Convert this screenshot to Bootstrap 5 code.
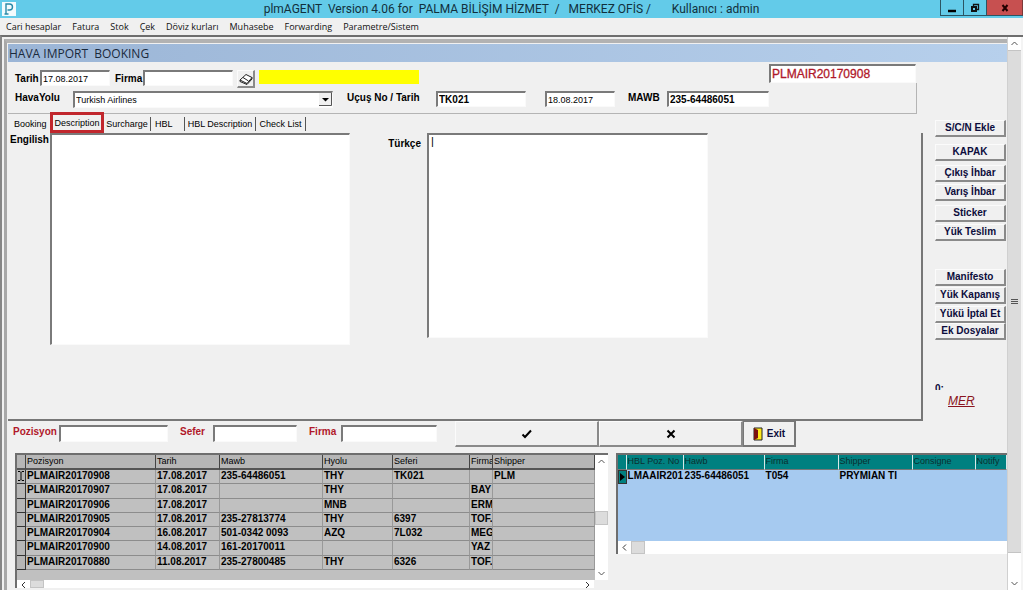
<!DOCTYPE html>
<html lang="tr">
<head>
<meta charset="utf-8">
<meta name="viewport" content="width=device-width, initial-scale=1">
<title>plmAGENT - Hava Import Booking</title>
<link href="https://cdn.jsdelivr.net/npm/bootstrap@5.3.0/dist/css/bootstrap.min.css" rel="stylesheet">
<style>
  :root { --face: #f0f0f0; --shade: #6e6e6e; --ui: "Liberation Sans", sans-serif; --segoe: "Open Sans", "Noto Sans", sans-serif; }
  body { background: var(--face); color: #000; font: 9px/14px var(--ui); overflow: hidden; }
  label, .strong-text { font: bold 10px/14px var(--ui); white-space: nowrap; }
  input, textarea, select, button { font: inherit; color: inherit; border-radius: 0; }

  .app-title { height: 18px; background: #63cbe9; color: #12303c; font: 12px/19px Roboto, sans-serif; white-space: pre; }
  .app-logo { width: 14px; height: 14px; margin: 2px 0 0 2px; }
  .app-caption { padding-left: 67px; }
  .win-btn { height: 16px; width: 23px; padding: 0; border: 1px solid #2b5563; border-top: 0; border-right: 0; background: #63cbe9; }
  .win-btn.close-btn { width: 37px; background: #c75050; border-right: 1px solid #7c3a3a; }
  .menu-strip { height: 17px; gap: 11px; padding-left: 6px; font: 9px/17px var(--segoe); }
  .menu-strip a { color: #111; text-decoration: none; white-space: nowrap; }

  .workspace { border-top: 2px solid var(--shade); border-left: 2px solid #868686; }
  .child-frame { margin: 2px 0 0 2px; border-top: 4px solid #b2b2b2; border-left: 3px solid #a8a8a8; padding: 1px 0 0 1px; min-width: 0; }
  .child-title { height: 18px; background: linear-gradient(90deg, #9bb5d6, #b7d0ec); color: #1b2a3c; font: 12px/19px var(--segoe); padding-left: 1px; white-space: pre; }

  .sunk { border: 1px solid #fafafa; border-top: 2px solid #7a7a7a; border-left: 2px solid #7a7a7a; background: #fff; padding: 0 0 0 1px; height: 16px; min-width: 0; line-height: 13px; outline: 0; }
  textarea.sunk { resize: none; padding: 0 2px; }
  .raised { background: var(--face); border: 1px solid #fbfbfb; border-right: 2px solid #8a8a8a; border-bottom: 2px solid #8a8a8a; padding: 0; }

  .booking-form { border-bottom: 1px solid #b4b4b4; height: 52px; margin-right: 6px; }
  .form-line { height: 21px; padding-left: 7px; }
  .booking-no { width: 148px; }
  .booking-no .sunk { height: 19px; width: 147px; font-size: 12px; line-height: 15px; color: #b0182a; -webkit-text-stroke: 0.3px #b0182a; }
  .panel-edge { border-right: 1px solid #b4b4b4; }
  .yellow-name { width: 160px; height: 14px; background: #ff0; }
  .w-date { width: 70px; } .w-firm { width: 90px; } .w-mawb { width: 102px; }
  .combo { position: relative; width: 260px; }
  .combo select { appearance: none; width: 100%; height: 17px; display: block; }
  .combo .drop { position: absolute; right: 1px; top: 2px; width: 13px; height: 13px; pointer-events: none; }

  .tab-strip { height: 19px; padding-left: 6px; }
  .tab-strip button { border: 0; background: none; padding: 0; height: 14px; line-height: 14px; white-space: nowrap; }
  .tab-strip .tab-sep { border-right: 1px solid #555; }
  .tab-strip button.current { border: 3px solid #c1272d; height: 21px; width: 54px; line-height: 14px; z-index: 1; margin-top: -2px; }
  .tab-body { height: 288px; border-right: 2px solid #777; border-bottom: 2px solid #777; }
  .desc-en { width: 300px; height: 212px; }
  .desc-tr { width: 281px; height: 205px; font-size: 11px; }

  .side-col { width: 85px; padding: 58px 2px 0 12px; }
  .side-col .raised { display: block; width: 71px; height: 17px; color: #0c0c3c; font: bold 10px/14px var(--ui); white-space: nowrap; }
  .clipped-code { height: 6px; margin-top: 44px; overflow: hidden; color: #0c0c3c; line-height: 10px; }
  .user-link { color: #8a1420; font: italic 12px/14px var(--ui); margin-left: 13px; }

  .search-row { height: 26px; padding-left: 5px; }
  .search-row label { color: #b0182a; }
  .search-row .sunk { height: 17px; }
  .search-row .raised { height: 26px; }
  .act { width: 144px; }
  .exit-btn { width: 53px; color: #0c0c3c; font: bold 10px/14px var(--ui); border-color: #777; }

  .grid-area { padding: 6px 0 0 7px; gap: 8px; }
  .grid-left { flex: 593 1 0; min-width: 0; border-top: 2px solid var(--shade); border-left: 2px solid var(--shade); background: #c0c0c0; }
  .grid-right { flex: 391 1 0; min-width: 0; border-top: 2px solid var(--shade); border-left: 2px solid var(--shade); background: #a6caf0; align-self: flex-start; }
  .data-grid { table-layout: fixed; width: 100%; border-collapse: separate; border-spacing: 0; }
  .data-grid th, .data-grid td { overflow: hidden; white-space: nowrap; padding: 0 0 0 1px; line-height: 12px; height: 14px; vertical-align: top; }
  .data-grid th { font-weight: normal; font-size: 9px; line-height: 13px; }
  .data-grid td { font: bold 10px/12px var(--ui); }
  .pos-grid { height: 115px; }
  .pos-grid th { background: #b6b6b6; border-right: 1px solid #444; border-bottom: 2px solid #555; }
  .pos-grid td { border-right: 1px solid #999; border-bottom: 1px solid #8c8c8c; }
  .pos-grid td:first-child { border-color: #333; background: #b6b6b6; padding: 0; }
  .hbl-grid th { background: #008080; color: #0b2f2f; border-right: 1px solid #d8e8e8; border-bottom: 1px solid #777; height: 15px; }
  .hbl-grid td:first-child { background: #008080; padding: 0; border: 1px solid #333; }
  .grid-box { height: 125px; }
  .hbl-box { height: 86px; }

  .bar-v { width: 15px; background: #fff; }
  .bar-h { height: 13px; background: #fff; }
  .arrow-box { display: block; width: 13px; height: 13px; flex: none; }
  .thumb { background: #dcdcdc; border: 1px solid #c4c4c4; flex: none; }
  .main-bar { border-left: 1px solid #d0d0d0; border-right: 2px solid #f4f4f4; width: 16px; }
</style>
</head>
<body class="d-flex flex-column min-vh-100">

<header class="app-title d-flex">
  <svg class="app-logo" viewBox="0 0 14 14"><rect width="14" height="14" fill="#f2fbfd"/><path d="M4 12V2h3.500a3 3 0 0 1 0 6H5.500M2.500 12h4" fill="none" stroke="#2a8aa8" stroke-width="1.400"/></svg>
  <div class="app-caption flex-grow-1 text-center">plmAGENT  Version 4.06 for  PALMA BİLİŞİM HİZMET  /   MERKEZ OFİS /       Kullanıcı : admin</div>
  <button class="win-btn d-flex" aria-label="Simge durumu"><svg class="m-auto" width="10" height="10"><path d="M1 8h8" stroke="#000" stroke-width="2.500"/></svg></button>
  <button class="win-btn d-flex" aria-label="Geri yükle"><svg class="m-auto" width="10" height="10" fill="none" stroke="#111"><path d="M3.500 3V1.500h5v5H7" stroke-width="1.300"/><rect x="2" y="4" width="4" height="4" stroke-width="2"/></svg></button>
  <button class="win-btn close-btn d-flex" aria-label="Kapat"><svg class="m-auto" width="10" height="10"><path d="M2.500 2l5 6M7.500 2l-5 6" stroke="#200" stroke-width="2"/></svg></button>
</header>

<nav class="menu-strip d-flex" aria-label="Menü">
  <a href="#">Cari hesaplar</a><a href="#">Fatura</a><a href="#">Stok</a><a href="#">Çek</a><a href="#">Döviz kurları</a><a href="#">Muhasebe</a><a href="#">Forwarding</a><a href="#">Parametre/Sistem</a>
</nav>

<div class="workspace d-flex flex-grow-1">
  <main class="child-frame flex-grow-1">
    <h1 class="child-title m-0">HAVA IMPORT  BOOKING</h1>

    <div class="d-flex">
      <div class="flex-grow-1">
        <form class="booking-form d-flex">
          <div class="flex-grow-1 pt-2">
            <div class="form-line d-flex">
              <label for="tarih" style="width:25px" class="pt-1 lh-1">Tarih</label>
              <input id="tarih" class="sunk w-date" value="17.08.2017">
              <label for="firma" class="pt-1 lh-1" style="width:33px;padding-left:5px">Firma</label>
              <input id="firma" class="sunk w-firm">
              <button type="button" class="raised d-flex ms-1" style="width:18px;height:18px" aria-label="Rehber"><svg class="m-auto" width="14" height="12" viewBox="0 0 14 12" fill="#fff" stroke="#222"><path d="M1 7l6-5.500L13 4.500 8 10.500z"/><path d="M1 7v1.500L8 11.500l5-5.500V4.500M4 4.500l5.500 3.500" fill="none"/></svg></button>
              <div class="yellow-name ms-1"></div>
            </div>
            <div class="form-line d-flex">
              <label for="hava" style="width:58px">HavaYolu</label>
              <div class="combo">
                <select id="hava" class="sunk"><option>Turkish Airlines</option></select>
                <svg class="drop" viewBox="0 0 13 13"><path d="M0 0h13v13H0z" fill="#f0f0f0"/><path d="M12.500 0v12.500H0" fill="none" stroke="#555"/><path d="M3 5h7L6.500 8.500z"/></svg>
              </div>
              <label for="ucus" style="width:103px;padding-left:14px">Uçuş No / Tarih</label>
              <input id="ucus" class="sunk w-firm strong-text" value="TK021">
              <input aria-label="Uçuş tarihi" class="sunk w-date" style="margin-left:19px" value="18.08.2017">
              <label for="mawb" style="width:52px;padding-left:13px">MAWB</label>
              <input id="mawb" class="sunk w-mawb strong-text" value="235-64486051">
            </div>
          </div>
          <div class="booking-no d-flex flex-column">
            <input aria-label="Booking no" class="sunk" style="margin-top:2px" value="PLMAIR20170908">
            <div class="panel-edge flex-grow-1"></div>
          </div>
        </form>

        <div class="tab-strip d-flex align-items-center" role="tablist">
          <button role="tab" style="width:36px" class="text-start">Booking</button>
          <button role="tab" class="current" aria-selected="true">Description</button>
          <button role="tab" class="tab-sep" style="width:47px">Surcharge</button>
          <button role="tab" class="tab-sep text-start ps-1" style="width:34px">HBL</button>
          <button role="tab" class="tab-sep" style="width:71px">HBL Description</button>
          <button role="tab" class="tab-sep" style="width:50px">Check List</button>
        </div>
        <div class="tab-body d-flex">
          <label for="en" style="width:42px;padding-left:2px">Engilish</label>
          <textarea id="en" class="sunk desc-en"></textarea>
          <label for="tr" class="text-end pt-1" style="width:77px;padding-right:6px">Türkçe</label>
          <textarea id="tr" class="sunk desc-tr">|</textarea>
        </div>
      </div>

      <aside class="side-col">
        <button class="raised" style="margin-bottom:7px">S/C/N Ekle</button>
        <button class="raised mb-1">KAPAK</button>
        <button class="raised" style="margin-bottom:2px">Çıkış İhbar</button>
        <button class="raised mb-1">Varış İhbar</button>
        <button class="raised" style="margin-bottom:2px">Sticker</button>
        <button class="raised" style="margin-bottom:28px">Yük Teslim</button>
        <button class="raised" style="margin-bottom:1px">Manifesto</button>
        <button class="raised" style="margin-bottom:2px">Yük Kapanış</button>
        <button class="raised">Yükü İptal Et</button>
        <button class="raised">Ek Dosyalar</button>
        <div class="clipped-code strong-text">0:</div>
        <div class="pt-1"><a href="#" class="user-link">MER</a></div>
      </aside>
    </div>

    <form class="search-row d-flex">
      <label for="s1" class="pt-1" style="width:46px">Pozisyon</label>
      <input id="s1" class="sunk mt-1" style="width:109px">
      <label for="s2" class="ps-2 pt-1 ms-1" style="width:41px">Sefer</label>
      <input id="s2" class="sunk mt-1" style="width:84px">
      <label for="s3" class="ps-2 pt-1 ms-1" style="width:40px">Firma</label>
      <input id="s3" class="sunk mt-1" style="width:96px">
      <button type="button" class="raised act d-flex" style="margin-left:18px" aria-label="Onayla"><svg class="m-auto" width="12" height="10"><path d="M1.500 5.500L4 8l6-6.500" fill="none" stroke="#000" stroke-width="2"/></svg></button>
      <button type="button" class="raised act d-flex" aria-label="Vazgeç"><svg class="m-auto" width="10" height="10"><path d="M1.500 1.500l7 7M8.500 1.500l-7 7" stroke="#000" stroke-width="2"/></svg></button>
      <button type="button" class="raised exit-btn d-flex align-items-center justify-content-center gap-1"><svg width="10" height="14"><path d="M1 1h8v12H1z" fill="#ffe81a" stroke="#222"/><path d="M1 1l4 2v8l-4 2z" fill="#7a1010"/></svg><span>Exit</span></button>
    </form>

    <div class="grid-area d-flex">
      <section class="grid-left">
        <div class="d-flex grid-box">
          <div class="flex-grow-1">
            <table class="data-grid pos-grid">
              <colgroup><col style="width:9px"><col style="width:130px"><col style="width:64px"><col style="width:103px"><col style="width:70px"><col style="width:77px"><col style="width:23px"><col></colgroup>
              <thead><tr><th></th><th>Pozisyon</th><th>Tarih</th><th>Mawb</th><th>Hyolu</th><th>Seferi</th><th>Firma</th><th>Shipper</th></tr></thead>
              <tbody>
                <tr><td><svg class="d-block" width="8" height="12" fill="none" stroke="#000"><path d="M1 1.500h2l1 1 1-1h2M4 2.500v7M1 10.500h2l1-1 1 1h2"/></svg></td><td>PLMAIR20170908</td><td>17.08.2017</td><td>235-64486051</td><td>THY</td><td>TK021</td><td></td><td>PLM</td></tr>
                <tr><td></td><td>PLMAIR20170907</td><td>17.08.2017</td><td></td><td>THY</td><td></td><td>BAY</td><td></td></tr>
                <tr><td></td><td>PLMAIR20170906</td><td>17.08.2017</td><td></td><td>MNB</td><td></td><td>ERM</td><td></td></tr>
                <tr><td></td><td>PLMAIR20170905</td><td>17.08.2017</td><td>235-27813774</td><td>THY</td><td>6397</td><td>TOF.</td><td></td></tr>
                <tr><td></td><td>PLMAIR20170904</td><td>16.08.2017</td><td>501-0342 0093</td><td>AZQ</td><td>7L032</td><td>MEG</td><td></td></tr>
                <tr><td></td><td>PLMAIR20170900</td><td>14.08.2017</td><td>161-20170011</td><td></td><td></td><td>YAZ</td><td></td></tr>
                <tr><td></td><td>PLMAIR20170880</td><td>11.08.2017</td><td>235-27800485</td><td>THY</td><td>6326</td><td>TOF.</td><td></td></tr>
              </tbody>
            </table>
          </div>
          <div class="bar-v d-flex flex-column align-items-center">
            <svg class="arrow-box" fill="none" stroke="#555"><path d="M3.500 8l3-3 3 3"/></svg>
            <div class="thumb w-100" style="height:14px;margin-top:43px"></div>
            <svg class="arrow-box mt-auto" fill="none" stroke="#555"><path d="M3.500 5l3 3 3-3"/></svg>
          </div>
        </div>
        <div class="d-flex" style="background:#f0f0f0">
          <div class="bar-h flex-grow-1 d-flex overflow-hidden" style="height:8px">
            <svg class="arrow-box" fill="none" stroke="#333"><path d="M8 2l-3 3 3 3"/></svg>
            <div class="thumb" style="width:14px"></div>
            <svg class="arrow-box ms-auto" fill="none" stroke="#333"><path d="M5 2l3 3-3 3"/></svg>
          </div>
          <div style="width:14px"></div>
        </div>
      </section>

      <section class="grid-right">
        <div class="hbl-box">
          <table class="data-grid hbl-grid">
            <colgroup><col style="width:9px"><col style="width:57px"><col style="width:81px"><col style="width:74px"><col style="width:74px"><col style="width:63px"><col></colgroup>
            <thead><tr><th></th><th>HBL Poz. No</th><th>Hawb</th><th>Firma</th><th>Shipper</th><th>Consigne</th><th>Notify</th></tr></thead>
            <tbody><tr><td><svg class="d-block" width="7" height="12"><path d="M1 2l5 4-5 4z"/></svg></td><td>LMAAIR201</td><td>235-64486051</td><td>T054</td><td>PRYMIAN TI</td><td></td><td></td></tr></tbody>
          </table>
        </div>
        <div class="bar-h d-flex">
          <svg class="arrow-box" fill="none" stroke="#333"><path d="M8 3.500l-3 3 3 3"/></svg>
          <div class="thumb" style="width:14px"></div>
        </div>
      </section>
    </div>
  </main>

  <div class="bar-v main-bar d-flex flex-column">
    <svg class="arrow-box" fill="none" stroke="#555"><path d="M3.500 8l3-3 3 3"/></svg>
    <div class="thumb flex-grow-1 d-flex border-start-0 border-end-0"><svg class="m-auto" width="7" height="7" stroke="#555"><path d="M0 1.500h7M0 3.500h7M0 5.500h7"/></svg></div>
    <div style="height:24px"></div>
    <svg class="arrow-box" fill="none" stroke="#555"><path d="M3.500 5l3 3 3-3"/></svg>
  </div>
</div>

<script src="https://cdn.jsdelivr.net/npm/bootstrap@5.3.0/dist/js/bootstrap.bundle.min.js"></script>
</body>
</html>
